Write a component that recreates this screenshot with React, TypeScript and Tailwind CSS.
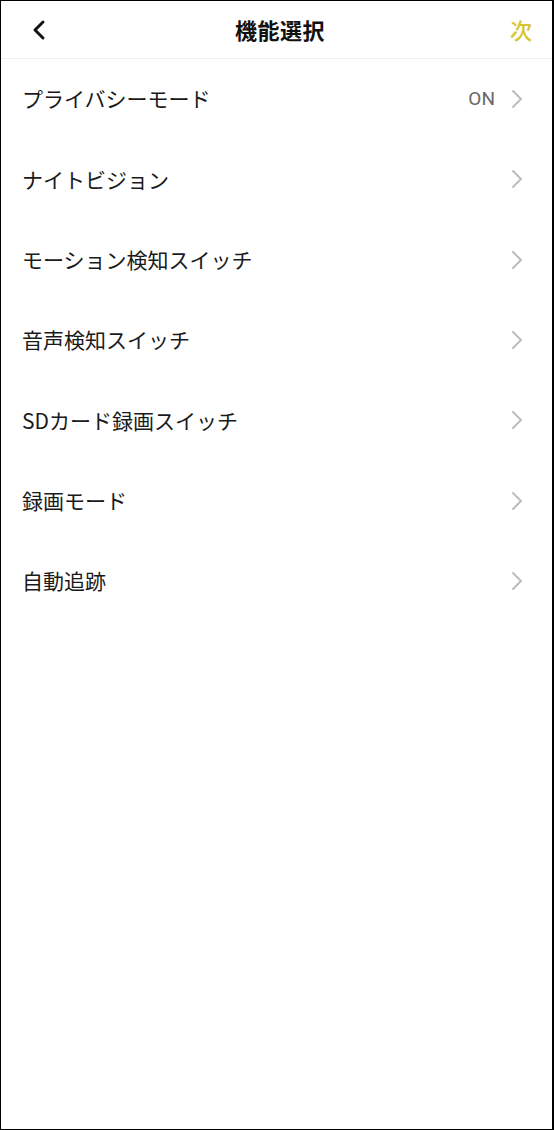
import React from 'react';

const items = [
  { label: 'プライバシーモード', value: 'ON' },
  { label: 'ナイトビジョン' },
  { label: 'モーション検知スイッチ' },
  { label: '音声検知スイッチ' },
  { label: 'SDカード録画スイッチ' },
  { label: '録画モード' },
  { label: '自動追跡' },
];

const Chevron = () => (
  <svg width="14" height="20" viewBox="0 0 14 20" fill="none">
    <polyline points="3,2 11,10 3,18" stroke="#bdbdbd" strokeWidth="2" strokeLinecap="round" strokeLinejoin="round" />
  </svg>
);

const App = () => {
  return (
    <div
      className="w-[554px] h-[1130px] bg-white border-t border-l border-b border-r-2 border-black flex flex-col"
      style={{ fontFamily: '"Noto Sans CJK JP", "Noto Sans", sans-serif' }}
    >
      <div className="h-[58px] border-b border-[#eeeeee] flex items-center justify-between pl-[29px] pr-[20px] shrink-0">
        <button className="w-[20px] h-[24px] flex items-center">
          <svg width="18" height="22" viewBox="0 0 18 22" fill="none">
            <polyline points="13,3 5,11 13,19" stroke="#111" strokeWidth="3" strokeLinecap="round" strokeLinejoin="round" />
          </svg>
        </button>
        <div className="text-[22px] font-bold text-[#111] tracking-[0.5px]">機能選択</div>
        <div className="text-[22px] text-[#d7c52f] font-medium">次</div>
      </div>

      <div className="flex flex-col">
        {items.map((item) => (
          <div key={item.label} className="h-[80.33px] flex items-center justify-between pl-[21px] pr-[28px]">
            <span className="text-[21px] text-[#1a1a1a]">{item.label}</span>
            <div className="flex items-center gap-[15px]">
              {item.value && (
                <span className="text-[19px] text-[#666666]" style={{ fontFamily: 'Roboto, sans-serif' }}>
                  {item.value}
                </span>
              )}
              <Chevron />
            </div>
          </div>
        ))}
      </div>
    </div>
  );
};

export default App;
